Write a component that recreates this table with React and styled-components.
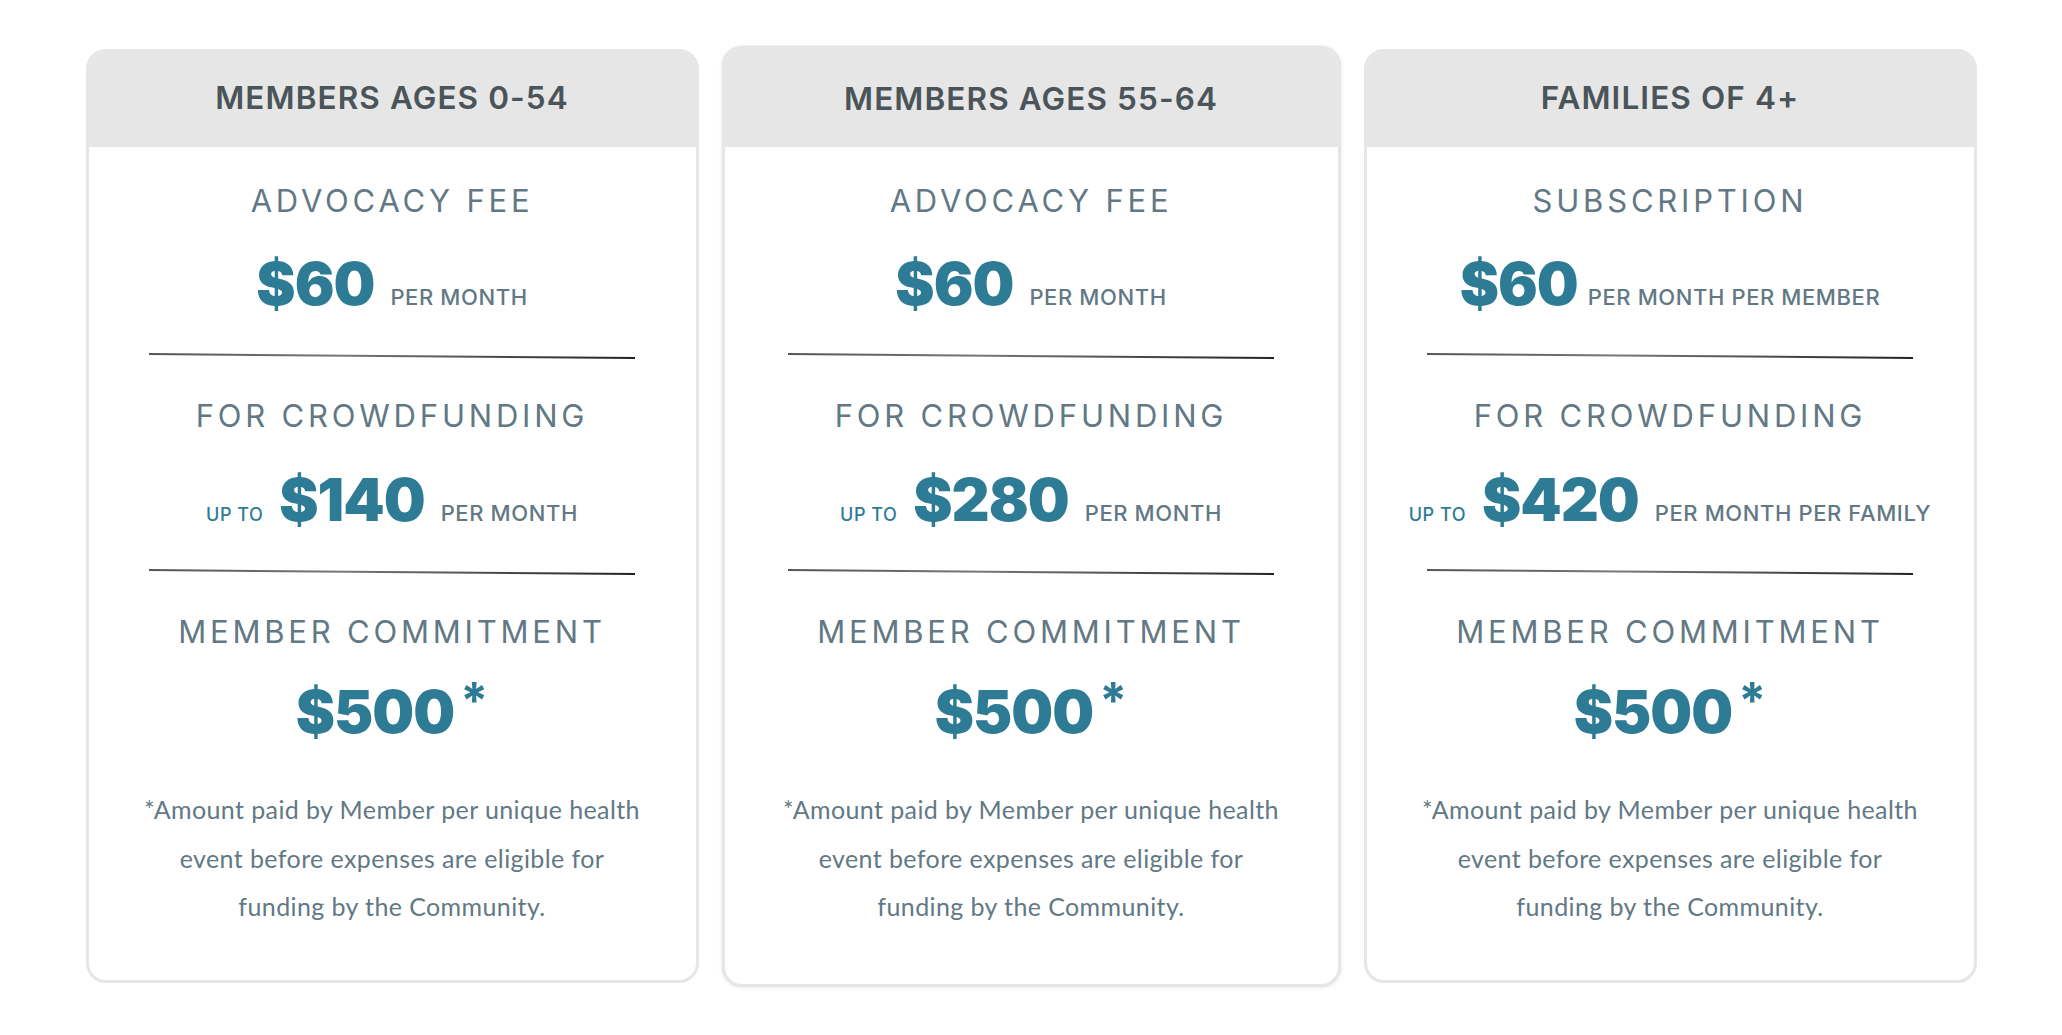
import React from "react";
import styled, { createGlobalStyle } from "styled-components";

const Global = createGlobalStyle`
  html, body { margin: 0; padding: 0; background: #ffffff; }
  body { font-family: "Inter", "Liberation Sans", sans-serif; }
`;

const Page = styled.div`
  width: 2062px;
  min-height: 1035px;
  display: flex;
  justify-content: center;
  align-items: flex-start;
  gap: 26px;
  padding-top: 49px;
  box-sizing: border-box;
`;

const Card = styled.div`
  width: ${(p) => (p.$raised ? 619 : 613)}px;
  height: ${(p) => (p.$raised ? 941 : 934)}px;
  margin: ${(p) => (p.$raised ? "-3px -3px 0" : "0")};
  box-sizing: border-box;
  border: 3px solid #e6e6e6;
  border-radius: 20px;
  background: #ffffff;
  overflow: hidden;
  display: flex;
  flex-direction: column;
  box-shadow: ${(p) => (p.$raised ? "0 0 0 1px #f2f2f2, 0 1px 5px rgba(0,0,0,0.06)" : "none")};
`;

const Header = styled.div`
  height: ${(p) => (p.$raised ? 98 : 95)}px;
  box-sizing: border-box;
  padding-bottom: ${(p) => (p.$raised ? 0 : 4)}px;
  flex: none;
  background: #e6e6e6;
  display: flex;
  align-items: center;
  justify-content: center;
  font-family: "Inter", "Liberation Sans", sans-serif;
  font-weight: 600;
  font-size: 31.5px;
  letter-spacing: 1.1px;
  color: #4a5459;
`;

const Body = styled.div`
  flex: 1;
  display: flex;
  flex-direction: column;
  align-items: center;
  padding-top: 34px;
`;

const Label = styled.div`
  height: 40px;
  line-height: 40px;
  margin-top: ${(p) => p.$mt || 0}px;
  font-family: "Inter", "Liberation Sans", sans-serif;
  font-weight: 400;
  font-size: 31px;
  letter-spacing: 3.8px;
  color: #627884;
  white-space: nowrap;
`;

const PriceRow = styled.div`
  height: 70px;
  margin-top: ${(p) => p.$mt || 28}px;
  display: flex;
  align-items: baseline;
  justify-content: center;
  gap: ${(p) => p.$gap ?? 16}px;
  line-height: 70px;
  white-space: nowrap;
`;

const Amount = styled.span`
  font-family: "Inter", "Liberation Sans", sans-serif;
  font-weight: 900;
  font-size: 59px;
  letter-spacing: -1px;
  color: #2e7b95;
`;

const Unit = styled.span`
  font-family: "Inter", "Liberation Sans", sans-serif;
  font-weight: 500;
  font-size: 22px;
  letter-spacing: 0.6px;
  color: #627884;
`;

const UpTo = styled.span`
  font-family: "Inter", "Liberation Sans", sans-serif;
  font-weight: 500;
  font-size: 18px;
  letter-spacing: 0.5px;
  color: #2e7b95;
`;

const Star = styled.span`
  align-self: flex-start;
  font-family: "Inter", "Liberation Sans", sans-serif;
  font-weight: 700;
  font-size: 50px;
  line-height: 1;
  margin-top: -2px;
  margin-left: 6px;
  color: #2e7b95;
`;

const Divider = styled.div`
  width: 486px;
  height: 1.5px;
  margin-top: 36px;
  background: linear-gradient(90deg, #555 0%, #777 40%, #222 100%);
  transform: rotate(0.45deg);
`;

const Note = styled.p`
  margin: 38px 0 0;
  text-align: center;
  white-space: nowrap;
  font-family: "Lato", "Liberation Sans", sans-serif;
  font-size: 25px;
  line-height: 48.6px;
  letter-spacing: 0.4px;
  color: #627884;
`;

const plans = [
  {
    title: "MEMBERS AGES 0-54",
    fee: "ADVOCACY FEE",
    feeUnit: "PER MONTH",
    feeGap: 16,
    crowd: "$140",
    crowdUnit: "PER MONTH",
  },
  {
    title: "MEMBERS AGES 55-64",
    fee: "ADVOCACY FEE",
    feeUnit: "PER MONTH",
    feeGap: 16,
    crowd: "$280",
    crowdUnit: "PER MONTH",
    raised: true,
  },
  {
    title: "FAMILIES OF 4+",
    fee: "SUBSCRIPTION",
    feeUnit: "PER MONTH PER MEMBER",
    feeGap: 10,
    crowd: "$420",
    crowdUnit: "PER MONTH PER FAMILY",
  },
];

function PlanCard({ plan }) {
  return (
    <Card $raised={plan.raised}>
      <Header $raised={plan.raised}>{plan.title}</Header>
      <Body>
        <Label>{plan.fee}</Label>
        <PriceRow $gap={plan.feeGap}>
          <Amount>$60</Amount>
          <Unit>{plan.feeUnit}</Unit>
        </PriceRow>
        <Divider />
        <Label $mt={39}>FOR CROWDFUNDING</Label>
        <PriceRow $mt={29}>
          <UpTo>UP TO</UpTo>
          <Amount>{plan.crowd}</Amount>
          <Unit>{plan.crowdUnit}</Unit>
        </PriceRow>
        <Divider />
        <Label $mt={40}>MEMBER COMMITMENT</Label>
        <PriceRow $mt={25} $gap={0}>
          <Amount>$500</Amount>
          <Star>*</Star>
        </PriceRow>
        <Note>
          *Amount paid by Member per unique health
          <br />
          event before expenses are eligible for
          <br />
          funding by the Community.
        </Note>
      </Body>
    </Card>
  );
}

export default function App() {
  return (
    <>
      <Global />
      <Page>
        {plans.map((p) => (
          <PlanCard key={p.title} plan={p} />
        ))}
      </Page>
    </>
  );
}
